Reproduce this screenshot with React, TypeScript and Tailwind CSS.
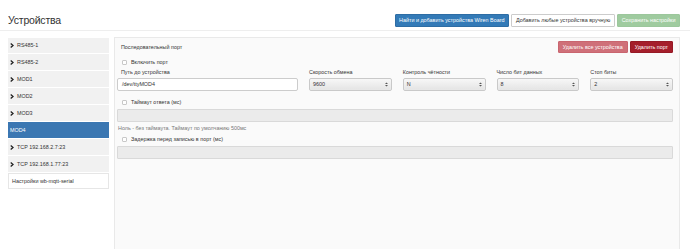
import React from 'react';

const ports = ['RS485-1', 'RS485-2', 'MOD1', 'MOD2', 'MOD3', 'MOD4', 'TCP 192.168.2.7:23', 'TCP 192.168.1.77:23'];

const Chevron = () => (
  <svg width="4" height="5" viewBox="0 0 4 5" className="mr-[3px] shrink-0">
    <path d="M0.7 0.6 L3 2.5 L0.7 4.4" fill="none" stroke="#222" strokeWidth="1.3" />
  </svg>
);

const SelectArrows = () => (
  <svg width="3" height="5" viewBox="0 0 3 5">
    <path d="M0 2 L1.5 0.4 L3 2 Z M0 3 L1.5 4.6 L3 3 Z" fill="#555" />
  </svg>
);

const Checkbox = () => (
  <span className="inline-block w-[5px] h-[5px] border border-[#c8c8c8] bg-white rounded-[1px] mr-[4px]" />
);

const Select = ({ value }: { value: string }) => (
  <div className="h-[13px] flex items-center justify-between px-[3px] rounded-[2px] border border-[#c9c9c9] bg-gradient-to-b from-[#f7f7f7] to-[#e4e4e4] shadow-[inset_0_0_1px_#fff]">
    <span>{value}</span>
    <SelectArrows />
  </div>
);

export default function App() {
  return (
    <div className="w-[690px] h-[249px] bg-white overflow-hidden text-[#333] text-[5.4px] font-['Liberation_Sans',Arial,sans-serif]">
      {/* Header */}
      <div className="flex items-center justify-between pl-[8px] pr-[10px] pt-[14px] pb-[3px] border-b border-[#eeeeee]">
        <h1 className="text-[10.5px] font-light tracking-[-0.2px] leading-[13px] -mt-[1px]">Устройства</h1>
        <div className="flex gap-[2.5px]">
          <button className="h-[13px] px-[3.5px] rounded-[1px] bg-[#337ab7] border border-[#2e6da4] text-white">Найти и добавить устройства Wiren Board</button>
          <button className="h-[13px] px-[3.5px] rounded-[1px] bg-white border border-[#cccccc] text-[#333]">Добавить любые устройства вручную</button>
          <button className="h-[13px] px-[3.5px] rounded-[1px] bg-[#9fcb9f] border border-[#9cc79c] text-white">Сохранить настройки</button>
        </div>
      </div>

      {/* Body */}
      <div className="flex gap-[5px] pl-[8px] pr-[10px] pt-[6px]">
        <div className="w-[101px] shrink-0 flex flex-col gap-[1.4px] pt-[0.5px]">
          {ports.map((p) => (
            <div
              key={p}
              className={
                p === 'MOD4'
                  ? 'h-[15.6px] flex items-center pl-[2px] bg-[#3b77b2] text-white'
                  : 'h-[15.6px] flex items-center pl-[2px] bg-[#f1f1f1] text-[#333]'
              }
            >
              {p !== 'MOD4' && <Chevron />}
              <span>{p}</span>
            </div>
          ))}
          <div className="h-[16px] flex items-center pl-[3px] bg-white border border-[#e6e6e6]">Настройки wb-mqtt-serial</div>
        </div>

        <div className="flex-1 h-[230px] border border-[#e9e9e9] bg-[#fafafa] pl-[2px] pr-[6px] pt-[3px]">
          <div className="flex items-center justify-between h-[12px]">
            <span className="pl-[4px] mt-[1px]">Последовательный порт</span>
            <div className="flex gap-[2px]">
              <button className="h-[12px] px-[4px] rounded-[1px] bg-[#cf7079] border border-[#c9656f] text-white">Удалить все устройства</button>
              <button className="h-[12px] px-[4px] rounded-[1px] bg-[#a51e2b] border border-[#961a26] text-white">Удалить порт</button>
            </div>
          </div>

          <div className="flex items-center pl-[5px] mt-[5px] h-[8px]">
            <Checkbox />
            <span>Включить порт</span>
          </div>

          <div className="grid grid-cols-[181px_repeat(4,1fr)] gap-x-[11px] mt-[2px]">
            {['Путь до устройства', 'Скорость обмена', 'Контроль чётности', 'Число бит данных', 'Стоп биты'].map((l, i) => (
              <div key={l} className={i === 0 ? 'pl-[4px] h-[8px] leading-[8px]' : 'h-[8px] leading-[8px]'}>{l}</div>
            ))}
            <div className="h-[13px] mt-[2px] flex items-center px-[4px] bg-white border border-[#cccccc] rounded-[2px]">/dev/ttyMOD4</div>
            <div className="mt-[2px]"><Select value="9600" /></div>
            <div className="mt-[2px]"><Select value="N" /></div>
            <div className="mt-[2px]"><Select value="8" /></div>
            <div className="mt-[2px]"><Select value="2" /></div>
          </div>

          <div className="flex items-center pl-[5px] mt-[8px] h-[6px]">
            <Checkbox />
            <span>Таймаут ответа (мс)</span>
          </div>
          <div className="h-[13px] mt-[4px] bg-[#ebebeb] border border-[#d9d9d9] rounded-[1px]" />
          <div className="mt-[3px] h-[7px] leading-[7px] pl-[1px] text-[#777]">Ноль - без таймаута. Таймаут по умолчанию 500мс</div>

          <div className="flex items-center pl-[5px] mt-[3px] h-[8px]">
            <Checkbox />
            <span>Задержка перед записью в порт (мс)</span>
          </div>
          <div className="h-[13px] mt-[3px] bg-[#ebebeb] border border-[#d9d9d9] rounded-[1px]" />
        </div>
      </div>
    </div>
  );
}
